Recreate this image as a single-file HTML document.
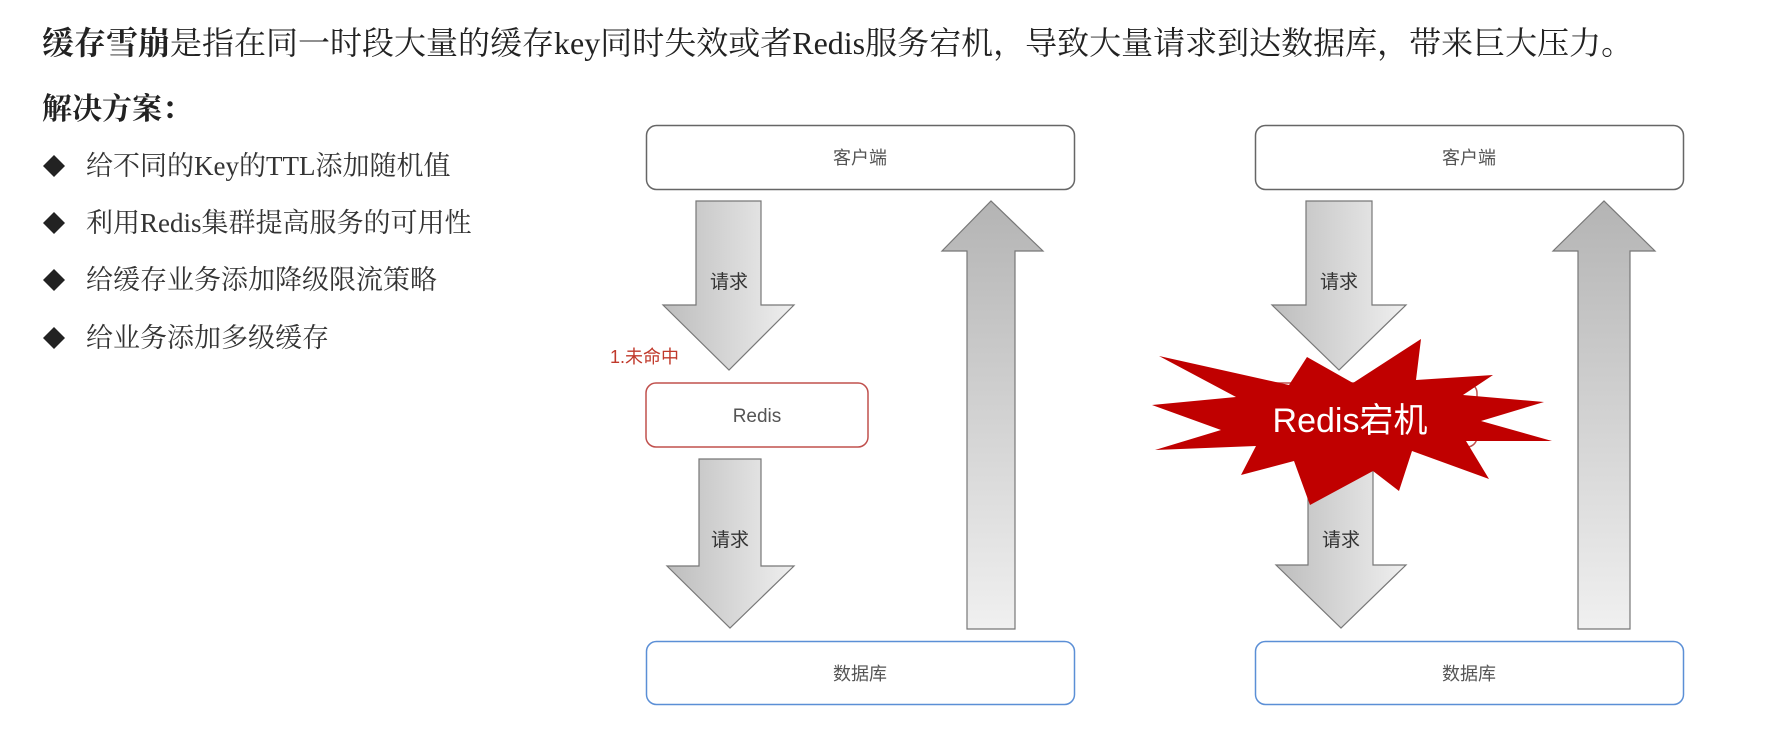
<!DOCTYPE html>
<html><head><meta charset="utf-8">
<style>
html,body{margin:0;padding:0;background:#fff;}
body{width:1783px;height:732px;overflow:hidden;position:relative;}
.serif{font-family:"Liberation Serif","Noto Serif CJK SC",serif;}
.sans{font-family:"Liberation Sans","Noto Sans CJK SC",sans-serif;}
</style></head><body>
<svg width="1783" height="732" viewBox="0 0 1783 732" xmlns="http://www.w3.org/2000/svg">
<defs>
<linearGradient id="gh" x1="0" y1="0" x2="1" y2="0">
<stop offset="0" stop-color="#bdbdbd"/><stop offset="1" stop-color="#efefef"/>
</linearGradient>
<linearGradient id="gv" x1="0" y1="0" x2="0" y2="1">
<stop offset="0" stop-color="#b4b4b4"/><stop offset="1" stop-color="#f0f0f0"/>
</linearGradient>
</defs>
<g class="serif" fill="#222">
<text x="42" y="54" font-size="32"><tspan font-weight="bold">缓存雪崩</tspan>是指在同一时段大量的缓存key同时失效或者Redis服务宕机，导致大量请求到达数据库，带来巨大压力。</text>
<text x="42" y="119" font-size="30" font-weight="bold">解决方案：</text>
<g font-size="27" fill="#333">
<text x="86" y="175">给不同的Key的TTL添加随机值</text>
<text x="86" y="232">利用Redis集群提高服务的可用性</text>
<text x="86" y="289">给缓存业务添加降级限流策略</text>
<text x="86" y="347">给业务添加多级缓存</text>
</g>
<g fill="#222">
<polygon points="54,155 65,166 54,177 43,166"/>
<polygon points="54,212 65,223 54,234 43,223"/>
<polygon points="54,269 65,280 54,291 43,280"/>
<polygon points="54,327 65,338 54,349 43,338"/>
</g>
</g>

<!-- Diagram 1 -->
<g class="sans">
<rect x="646.5" y="125.5" width="428" height="64" rx="10" fill="#fff" stroke="#666" stroke-width="1.5"/>
<text x="860" y="164" font-size="18" fill="#555" text-anchor="middle">客户端</text>
<polygon points="696,201 761,201 761,305 794,305 729,370 663,305 696,305" fill="url(#gh)" stroke="#777" stroke-width="1.2"/>
<text x="729" y="288" font-size="19" fill="#333" text-anchor="middle">请求</text>
<text x="610" y="363" font-size="18" fill="#c0392b">1.未命中</text>
<rect x="646" y="383" width="222" height="64" rx="10" fill="#fff" stroke="#c0504d" stroke-width="1.5"/>
<text x="757" y="422" font-size="19" fill="#555" text-anchor="middle">Redis</text>
<polygon points="699,459 761,459 761,566 794,566 730,628 667,566 699,566" fill="url(#gh)" stroke="#777" stroke-width="1.2"/>
<text x="730" y="546" font-size="19" fill="#333" text-anchor="middle">请求</text>
<polygon points="967,629 1015,629 1015,251 1043,251 991,201 942,251 967,251" fill="url(#gv)" stroke="#777" stroke-width="1.2"/>
<rect x="646.5" y="641.5" width="428" height="63" rx="10" fill="#fff" stroke="#5b8fd6" stroke-width="1.5"/>
<text x="860" y="680" font-size="18" fill="#555" text-anchor="middle">数据库</text>
</g>

<!-- Diagram 2 -->
<g class="sans">
<rect x="1255.5" y="125.5" width="428" height="64" rx="10" fill="#fff" stroke="#666" stroke-width="1.5"/>
<text x="1469" y="164" font-size="18" fill="#555" text-anchor="middle">客户端</text>
<polygon points="1306,201 1372,201 1372,305 1406,305 1339,370 1272,305 1306,305" fill="url(#gh)" stroke="#777" stroke-width="1.2"/>
<text x="1339" y="288" font-size="19" fill="#333" text-anchor="middle">请求</text>
<rect x="1255" y="383" width="222" height="64" rx="10" fill="#fff" stroke="#c0504d" stroke-width="1.5"/>
<polygon points="1308,455 1373,455 1373,565 1406,565 1341,628 1276,565 1308,565" fill="url(#gh)" stroke="#777" stroke-width="1.2"/>
<text x="1341" y="546" font-size="19" fill="#333" text-anchor="middle">请求</text>
<polygon points="1578,629 1630,629 1630,251 1655,251 1604,201 1553,251 1578,251" fill="url(#gv)" stroke="#777" stroke-width="1.2"/>
<rect x="1255.5" y="641.5" width="428" height="63" rx="10" fill="#fff" stroke="#5b8fd6" stroke-width="1.5"/>
<text x="1469" y="680" font-size="18" fill="#555" text-anchor="middle">数据库</text>
<polygon fill="#c00000" points="1159,356 1289,385 1307,357 1353,383 1421,339 1416,380 1493,375 1463,395 1544,402 1481,421 1552,441 1466,441 1489,479 1412,451 1399,491 1373,471 1310,505 1294,461 1241,475 1256,446 1155,450 1221,430 1152,405 1236,397"/>
<text x="1350" y="432" font-size="34" fill="#fff" text-anchor="middle">Redis宕机</text>
</g>
</svg>
</body></html>
